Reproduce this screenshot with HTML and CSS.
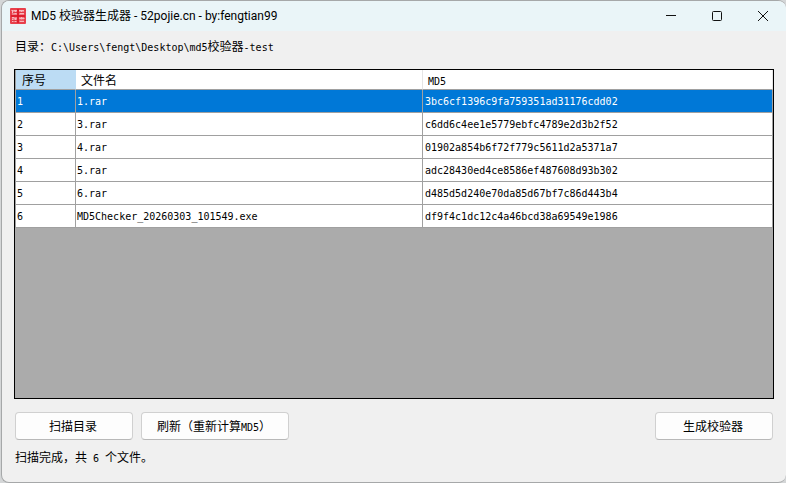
FILE: index.html
```html
<!DOCTYPE html>
<html lang="zh-CN">
<head>
<meta charset="utf-8">
<title>MD5 校验器生成器</title>
<link rel="stylesheet" href="styles.css">
</head>
<body>
<div class="window">
  <header class="titlebar">
    <svg class="app-icon" viewBox="0 0 16 16" aria-hidden="true">
      <rect width="16" height="16" rx="1" fill="#e8404c"/>
      <path d="M8 1v14M1 8h14" stroke="#dc1424" stroke-width="1.500"/>
      <g fill="#f0808a">
        <path d="M2 2h5v5H2zM9 2h5v5H9zM2 9h5v5H2zM9 9h5v5H9z"/>
      </g>
      <g fill="none" stroke="#f8b8bc" stroke-width="1">
        <path d="M1.500 2.500h2M2.500 2v3M4 2.500h3M5.500 2v2M4.500 5.500h2"/>
        <path d="M9 2.500h5M11.500 2v2M10 5.500h4"/>
        <path d="M2 9.500h2M2.500 11v3M4.500 10.500h2M5.500 11v3"/>
        <path d="M9.500 10.500h5M10 13.500h4M11.500 9v3"/>
      </g>
      <path d="M3 4.500h4M9 4.500h6M2 12.500h5M9 12h6" fill="none" stroke="#e23a46" stroke-width="1"/>
    </svg>
    <h1 class="title">MD5 校验器生成器 - 52pojie.cn - by:fengtian99</h1>
    <div class="controls">
      <button class="control" type="button" aria-label="最小化"><svg viewBox="0 0 12 12"><path d="M1 5.500h10"/></svg></button>
      <button class="control" type="button" aria-label="最大化"><svg viewBox="0 0 12 12"><rect x="1.500" y="1.500" width="9" height="9" rx="1"/></svg></button>
      <button class="control" type="button" aria-label="关闭"><svg viewBox="0 0 12 12"><path d="M1 1l10 10M11 1L1 11"/></svg></button>
    </div>
  </header>
  <main class="content">
    <p class="path">目录：<span class="mono">C:\Users\fengt\Desktop\md5</span>校验器<span class="mono">-test</span></p>
    <div class="grid">
      <table class="files">
        <colgroup><col class="col-index"><col class="col-name"><col></colgroup>
        <thead>
          <tr><th class="current">序号</th><th>文件名</th><th><span class="mono">MD5</span></th></tr>
        </thead>
        <tbody class="mono">
          <tr class="selected"><td>1</td><td>1.rar</td><td>3bc6cf1396c9fa759351ad31176cdd02</td></tr>
          <tr><td>2</td><td>3.rar</td><td>c6dd6c4ee1e5779ebfc4789e2d3b2f52</td></tr>
          <tr><td>3</td><td>4.rar</td><td>01902a854b6f72f779c5611d2a5371a7</td></tr>
          <tr><td>4</td><td>5.rar</td><td>adc28430ed4ce8586ef487608d93b302</td></tr>
          <tr><td>5</td><td>6.rar</td><td>d485d5d240e70da85d67bf7c86d443b4</td></tr>
          <tr><td>6</td><td>MD5Checker_20260303_101549.exe</td><td>df9f4c1dc12c4a46bcd38a69549e1986</td></tr>
        </tbody>
      </table>
    </div>
    <div class="actions">
      <button class="button" type="button">扫描目录</button>
      <button class="button wide" type="button">刷新（重新计算<span class="mono">MD5</span>）</button>
      <button class="button end" type="button">生成校验器</button>
    </div>
    <p class="status">扫描完成，共<span class="mono"> 6 </span>个文件。</p>
  </main>
</div>
</body>
</html>
```
FILE: styles.css
```css
* { box-sizing: border-box; }

body {
  margin: 0;
  background: #d4d6d7;
  color: #000;
  font: 12px/16px "Noto Sans CJK SC", sans-serif;
}

.mono {
  font-family: "DejaVu Sans Mono", monospace;
  font-size: 10px;
  line-height: 10px;
  white-space: pre;
}

.window {
  display: flex;
  flex-direction: column;
  height: 100vh;
  margin-left: 1px;
  overflow: hidden;
  border: 1px solid #a6a8a9;
  border-right-width: 0;
  border-radius: 8px;
  background: #f0f0f0;
}

.titlebar {
  display: flex;
  flex: none;
  align-items: center;
  height: 30px;
  padding-left: 8px;
  background: #eaf5f8;
}

.app-icon { width: 16px; height: 16px; }

.title {
  margin: 0 auto 0 5px;
  font: 12px/16px Roboto, "Noto Sans CJK SC", sans-serif;
}

.controls { display: flex; align-self: stretch; }

.control {
  display: grid;
  place-items: center;
  width: 46px;
  padding: 0;
  border: 0;
  background: none;
}

.control svg {
  width: 12px;
  height: 12px;
  fill: none;
  stroke: #111;
}

.content {
  display: flex;
  flex: 1;
  flex-direction: column;
  min-height: 0;
  padding: 7px 12px 17px;
}

.path, .status { margin: 0 1px; }

.grid {
  flex: 1;
  min-height: 0;
  margin: 15px 0 13px;
  overflow: hidden;
  border: 1px solid #000;
  background: #ababab;
}

.files {
  width: 100%;
  table-layout: fixed;
  border-collapse: separate;
  border-spacing: 0;
  border-left: 1px solid #a0a0a0;
}

.col-index { width: 60px; }
.col-name { width: 347px; }

.files th, .files td {
  border-right: 1px solid #a0a0a0;
  border-bottom: 1px solid #a0a0a0;
  background: #fff;
  text-align: left;
}

.files th {
  height: 20px;
  padding: 0 5px;
  border-right-color: #e5e5e5;
  font-weight: normal;
}

.files .current { border-right-color: #bcdcf4; padding-left: 6px; background: #bcdcf4; }

.files td {
  height: 23px;
  padding: 2px 1px 0;
}

.files td:last-child { padding-left: 2px; }

.files .selected td { background: #0078d7; color: #fff; }

.actions { display: flex; gap: 8px; padding: 0 1px; }

.button {
  width: 118px;
  height: 28px;
  padding: 0 2px 0 0;
  border: 1px solid #d0d0d0;
  border-bottom-color: #b8b8b8;
  border-radius: 4px;
  background: #fdfdfd;
  color: #000;
  font: inherit;
}

.wide { width: 148px; }
.end { margin-left: auto; }

.status { margin-top: 9px; }
```
